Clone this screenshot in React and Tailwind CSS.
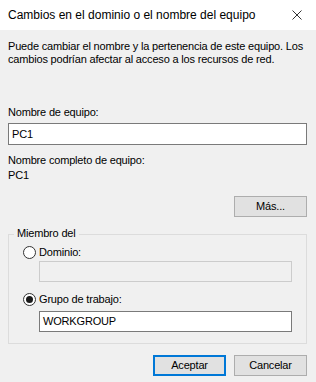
import React from "react";

function Radio({ checked, label }) {
    return (
        <div className="flex items-center h-[13px]">
            <span className="w-[13px] h-[13px] rounded-full border border-[#333333] bg-white flex items-center justify-center">
                {checked && <span className="w-[7px] h-[7px] rounded-full bg-[#1a1a1a]" />}
            </span>
            <span className="ml-[3px]">{label}</span>
        </div>
    );
}

function WinButton({ children, primary }) {
    return (
        <button
            className={
                primary
                    ? "w-[73px] h-[21px] bg-[#e1e1e1] border-2 border-[#0078d7] text-black leading-[13px]"
                    : "w-[73px] h-[21px] bg-[#e1e1e1] border border-[#adadad] text-black leading-[13px]"
            }
        >
            {children}
        </button>
    );
}

export default function App() {
    return (
        <div className="w-[316px] h-[382px] overflow-hidden bg-[#f0f0f0] text-black text-[11px] leading-[13px] tracking-[-0.18px] font-['Liberation_Sans',Arial,sans-serif]">
            {/* Title bar */}
            <div className="h-[30px] bg-white flex items-center justify-between pl-2 pr-[14px] text-[12px] tracking-normal">
                <span>Cambios en el dominio o el nombre del equipo</span>
                <svg width="10" height="10" viewBox="0 0 10 10" className="-mt-[1px]">
                    <path d="M0.5 0.5 L9.5 9.5 M9.5 0.5 L0.5 9.5" stroke="#333333" strokeWidth="1" fill="none" />
                </svg>
            </div>

            <div className="pl-2 pr-[9px]">
                <p className="mt-[10px] whitespace-nowrap">
                    Puede cambiar el nombre y la pertenencia de este equipo. Los
                    <br />
                    cambios podrían afectar al acceso a los recursos de red.
                </p>

                <div className="mt-[40px]">Nombre de equipo:</div>
                <div className="mt-[4px] h-[22px] border border-[#7a7a7a] bg-white pl-[3px] flex items-center">PC1</div>

                <div className="mt-[9px]">Nombre completo de equipo:</div>
                <div className="mt-[2px]">PC1</div>

                <div className="mt-[14px] flex justify-end">
                    <WinButton>Más...</WinButton>
                </div>

                {/* Miembro del */}
                <div className="mt-[17px] h-[110px] relative border border-[#dcdcdc] pl-[14px] pt-[11px]">
                    <span className="absolute top-[-8px] left-[5px] px-[3px] bg-[#f0f0f0]">Miembro del</span>
                    <Radio label="Dominio:" />
                    <div className="mt-[2px] ml-[16px] w-[253px] h-[21px] border border-[#cccccc] bg-[#f0f0f0]" />
                    <div className="mt-[11px]">
                        <Radio checked label="Grupo de trabajo:" />
                    </div>
                    <div className="mt-[5px] ml-[16px] w-[253px] h-[21px] border border-[#7a7a7a] bg-white pl-[3px] flex items-center">
                        WORKGROUP
                    </div>
                </div>

                <div className="mt-[11px] flex justify-end gap-[8px]">
                    <WinButton primary>Aceptar</WinButton>
                    <WinButton>Cancelar</WinButton>
                </div>
            </div>
        </div>
    );
}
